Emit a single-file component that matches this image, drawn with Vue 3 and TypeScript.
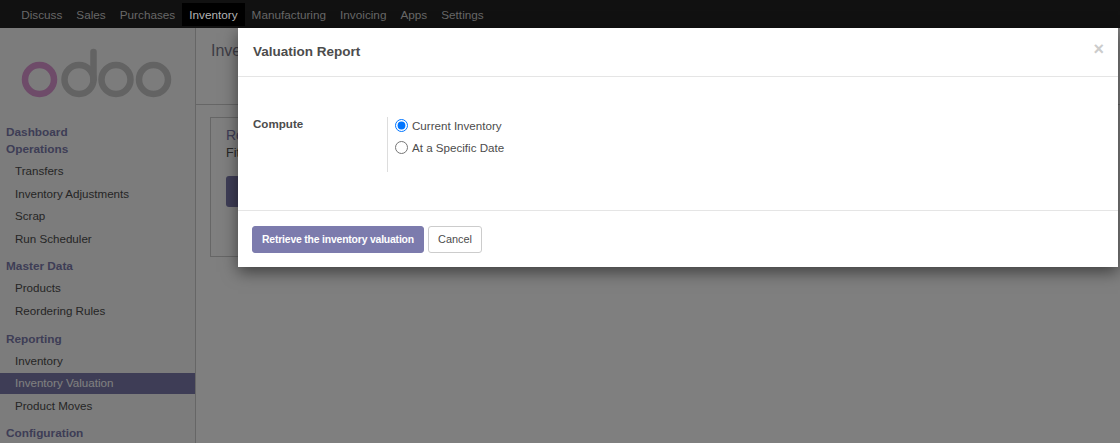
<template>
  <div class="page">
    <nav class="topbar">
      <a v-for="item in navItems" :key="item" class="topbar__item" :class="{ 'is-active': item === 'Inventory' }">{{ item }}</a>
    </nav>
    <div class="body">
      <aside class="sidebar">
        <svg class="logo" width="170" height="70" viewBox="0 0 170 70" aria-hidden="true">
          <circle cx="29.5" cy="39.5" r="14.5" fill="none" stroke="#dc96d2" stroke-width="6.5" />
          <circle cx="69" cy="39.5" r="14.5" fill="none" stroke="#c6c6c6" stroke-width="6.5" />
          <path d="M83.5 39.5V12" fill="none" stroke="#c6c6c6" stroke-width="6.5" stroke-linecap="round" />
          <circle cx="106" cy="39.5" r="14.5" fill="none" stroke="#c6c6c6" stroke-width="6.5" />
          <circle cx="143.5" cy="39.5" r="14.5" fill="none" stroke="#c6c6c6" stroke-width="6.5" />
        </svg>
        <div v-for="group in menu" :key="group.title" class="menu-group">
          <div class="menu-group__title">{{ group.title }}</div>
          <div
            v-for="entry in group.items"
            :key="entry"
            class="menu-group__item"
            :class="{ 'is-selected': entry === 'Inventory Valuation' }"
          >
            {{ entry }}
          </div>
        </div>
      </aside>
      <main class="content">
        <div class="content__head">Inve</div>
        <div class="content__main">
          <div class="report-card">
            <div class="report-card__title">Re</div>
            <div class="report-card__text">Fit</div>
            <div class="report-card__btn"></div>
          </div>
        </div>
      </main>
    </div>
    <div class="backdrop"></div>
    <div class="modal">
      <header class="modal__header">
        <h4>Valuation Report</h4>
        <span class="modal__close">×</span>
      </header>
      <section class="modal__body">
        <div class="modal__label">Compute</div>
        <div class="modal__field">
          <label class="radio"><input type="radio" name="compute" checked />Current Inventory</label>
          <label class="radio"><input type="radio" name="compute" />At a Specific Date</label>
        </div>
      </section>
      <footer class="modal__footer">
        <button class="btn btn--primary">Retrieve the inventory valuation</button>
        <button class="btn">Cancel</button>
      </footer>
    </div>
  </div>
</template>

<script setup lang="ts">
const navItems = ['Discuss', 'Sales', 'Purchases', 'Inventory', 'Manufacturing', 'Invoicing', 'Apps', 'Settings']

const menu = [
  { title: 'Dashboard', items: [] as string[] },
  { title: 'Operations', items: ['Transfers', 'Inventory Adjustments', 'Scrap', 'Run Scheduler'] },
  { title: 'Master Data', items: ['Products', 'Reordering Rules'] },
  { title: 'Reporting', items: ['Inventory', 'Inventory Valuation', 'Product Moves'] },
  { title: 'Configuration', items: [] as string[] },
]
</script>

<style>
html,
body {
  margin: 0;
  height: 100%;
  overflow: hidden;
}
</style>

<style scoped>
.page {
  position: relative;
  height: 443px;
  overflow: hidden;
  font-family: 'Liberation Sans', Arial, sans-serif;
  font-size: 11.6px;
  color: #4c4c4c;
  background: #fff;
  display: flex;
  flex-direction: column;
}

.topbar {
  height: 28px;
  flex: none;
  display: flex;
  padding: 3px 0 2px 14.2px;
  background: #111;
  position: relative;
  z-index: 3;
  box-sizing: border-box;
  font-size: 11.75px;
}

.topbar__item {
  padding: 0 7px;
  line-height: 23px;
  color: #686868;
}

.topbar__item.is-active {
  color: #b4b4b4;
  background: #000;
}

.body {
  flex: 1;
  display: flex;
  min-height: 0;
}

.sidebar {
  width: 195px;
  flex: none;
  border-right: 1px solid #ccc;
  background: #f8f8f8;
  padding-top: 12px;
  overflow: hidden;
}

.logo {
  display: block;
  margin: 0 0 14px 10px;
}

.menu-group {
  margin-bottom: 8.7px;
}

.menu-group:first-of-type {
  margin-bottom: 0;
}

.menu-group__title {
  padding-left: 6px;
  font-weight: 700;
  font-size: 11.8px;
  line-height: 17px;
  color: #7c7bad;
}

.menu-group__item {
  height: 20.7px;
  line-height: 20.7px;
  margin: 2px 0;
  padding-left: 15px;
}

.menu-group__title + .menu-group__item {
  margin-top: 3px;
}

.menu-group__item.is-selected {
  background: #7c7bad;
  color: #fff;
}

.content {
  flex: 1;
  min-width: 0;
}

.content__head {
  height: 77px;
  box-sizing: border-box;
  padding: 14px 15px;
  font-size: 16px;
  color: #7c7a8c;
  border-bottom: 1px solid #ccc;
}

.content__main {
  padding: 12px 14px;
}

.report-card {
  width: 400px;
  height: 140px;
  box-sizing: border-box;
  border: 1px solid #ccc;
  padding: 9px 15px;
}

.report-card__title {
  font-size: 14px;
  line-height: 17px;
  color: #7c7bad;
}

.report-card__text {
  font-size: 12.5px;
  line-height: 16px;
  margin-top: 1px;
}

.report-card__btn {
  margin-top: 15px;
  width: 100px;
  height: 31px;
  border-radius: 3px;
  background: #7c7bad;
}

.backdrop {
  position: absolute;
  left: 0;
  right: 0;
  top: 0;
  bottom: 0;
  background: rgba(0, 0, 0, 0.5);
  z-index: 2;
}

.modal {
  position: absolute;
  left: 238px;
  top: 28px;
  width: 880px;
  height: 239px;
  background: #fff;
  z-index: 4;
  box-shadow: 0 5px 15px rgba(0, 0, 0, 0.5);
  display: flex;
  flex-direction: column;
}

.modal__header {
  height: 49px;
  flex: none;
  box-sizing: border-box;
  border-bottom: 1px solid #e5e5e5;
  padding: 0 14px 2px 15px;
  display: flex;
  align-items: center;
  justify-content: space-between;
}

.modal__header h4 {
  margin: 0;
  font-size: 13.5px;
  font-weight: 700;
  color: #4c4c4c;
}

.modal__close {
  font-size: 18px;
  font-weight: 700;
  line-height: 14px;
  margin-bottom: 4px;
  color: #ccc;
}

.modal__body {
  flex: 1;
  display: flex;
  padding: 40px 15px 0;
}

.modal__label {
  width: 134px;
  font-weight: 700;
  line-height: 14px;
}

.modal__field {
  height: 55px;
  border-left: 1px solid #ddd;
  padding-left: 7px;
  display: flex;
  flex-direction: column;
  gap: 5px;
}

.radio {
  display: flex;
  align-items: center;
  gap: 4px;
  height: 17px;
}

.radio input {
  margin: 0;
  width: 13px;
  height: 13px;
}

.modal__footer {
  height: 57px;
  flex: none;
  box-sizing: border-box;
  border-top: 1px solid #e5e5e5;
  padding: 15px 14px;
  display: flex;
  gap: 4px;
}

.btn {
  height: 27px;
  width: 54px;
  box-sizing: border-box;
  padding: 0 0 1px;
  font-family: inherit;
  font-size: 10.9px;
  border: 1px solid #ccc;
  border-radius: 3px;
  background: #fff;
  color: #4c4c4c;
}

.btn--primary {
  width: 172px;
  padding: 0;
  font-size: 10.4px;
  letter-spacing: -0.18px;
  font-weight: 700;
  color: #fff;
  background: #7c7bad;
  border-color: #7c7bad;
}
</style>
